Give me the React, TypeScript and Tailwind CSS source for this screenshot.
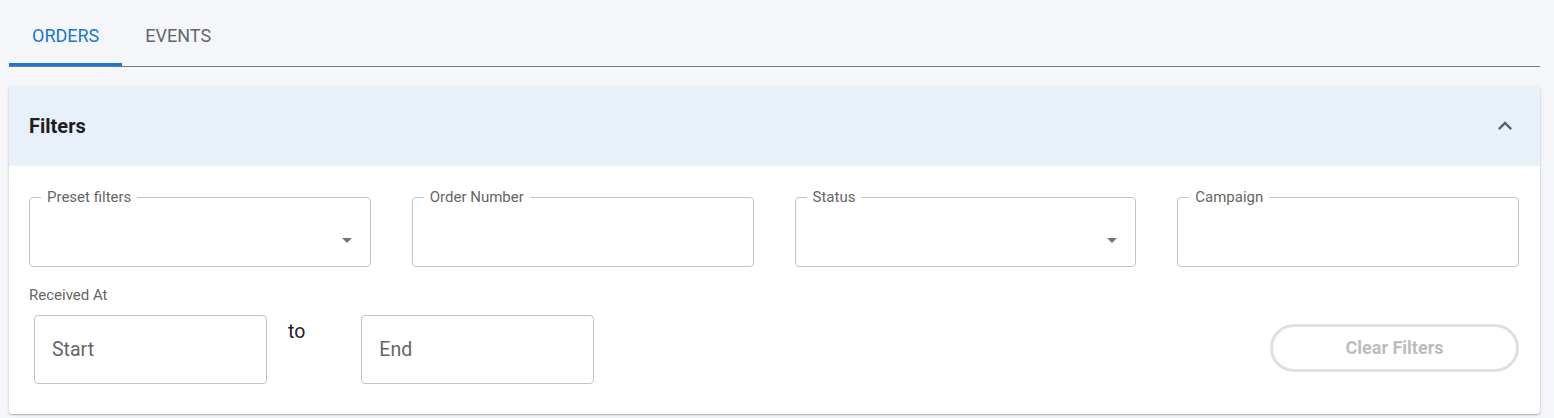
import { ReactNode } from "react";

const ArrowDrop = () => (
  <svg viewBox="0 0 24 24" className="w-6 h-6 fill-[#757575]">
    <path d="M7 10l5 5 5-5z" />
  </svg>
);

const OutlinedField = ({ label, select }: { label: string; select?: boolean }) => (
  <fieldset className="relative h-[78px] border border-[#c4c4c4] rounded-[4px] px-[11px] min-w-0">
    <legend className="px-[6px] text-[15px] leading-[16px] text-[#666]">{label}</legend>
    {select && (
      <div className="absolute right-[11px] top-[23px]">
        <ArrowDrop />
      </div>
    )}
  </fieldset>
);

const DateBox = ({ children }: { children: ReactNode }) => (
  <div className="w-[233px] h-[69px] border border-[#c4c4c4] rounded-[4px] flex items-center pl-[17px] text-[19.5px] text-[#666]">
    {children}
  </div>
);

export default function App() {
  return (
    <div className="min-h-screen bg-[#f5f6fa] pl-[9px] pr-[14px] font-['Roboto',sans-serif]">
      <div className="flex border-b border-[#757a8a]">
        <div className="relative px-[23px] pt-[25px] pb-[20px] text-[18px] leading-[21px] text-[#1976d2]">
          ORDERS
          <div className="absolute left-0 right-0 bottom-0 h-[3px] bg-[#1976d2]" />
        </div>
        <div className="px-[23px] pt-[25px] pb-[20px] text-[18px] leading-[21px] text-[#666]">
          EVENTS
        </div>
      </div>

      <div className="mt-[19px] bg-white rounded-[4px] shadow-[0_1px_3px_rgba(0,0,0,0.2),0_1px_1px_rgba(0,0,0,0.12)] overflow-hidden">
        <div className="h-[80px] bg-[#e8f0fa] flex items-center justify-between pl-[20px] pr-[21px]">
          <h2 className="text-[20px] font-bold text-[#1e1e1e]">Filters</h2>
          <svg viewBox="0 0 24 24" className="w-7 h-7 fill-[#5f6368]">
            <path d="M12 8l-6 6 1.41 1.41L12 10.83l4.59 4.58L18 14z" />
          </svg>
        </div>

        <div className="px-[20px] pt-[23px] pb-[30px]">
          <div className="grid grid-cols-4 gap-[41px] pr-px">
            <OutlinedField label="Preset filters" select />
            <OutlinedField label="Order Number" />
            <OutlinedField label="Status" select />
            <OutlinedField label="Campaign" />
          </div>

          <div className="mt-[19px] text-[15px] leading-[18px] text-[#666]">Received At</div>

          <div className="mt-[11px] flex items-center justify-between">
            <div className="flex items-start pl-[5px]">
              <DateBox>Start</DateBox>
              <span className="pt-[5px] ml-[21px] mr-[56px] text-[19.5px] leading-[23px] text-[#222]">to</span>
              <DateBox>End</DateBox>
            </div>
            <button className="w-[249px] h-[48px] mb-[4px] rounded-full border-[3px] border-[#e0e0e0] text-[18px] font-bold text-[#bdbdbd] mr-px">
              Clear Filters
            </button>
          </div>
        </div>
      </div>
    </div>
  );
}
